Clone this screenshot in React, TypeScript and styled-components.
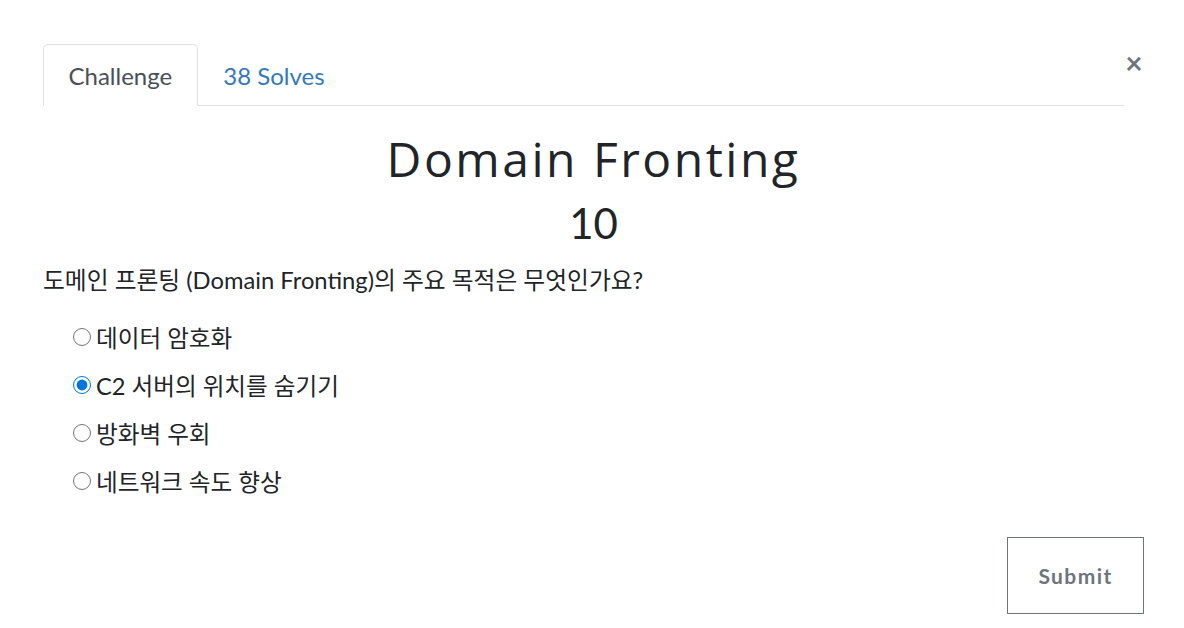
import React, { useState } from "react";
import styled, { createGlobalStyle } from "styled-components";

const Global = createGlobalStyle`
  html, body { margin: 0; padding: 0; background: #fff; }
  body { font-family: Lato, "Noto Sans CJK KR", sans-serif; color: #212529; }
  * { box-sizing: border-box; }
`;

const Page = styled.div`
  width: 1184px;
  height: 628px;
  padding: 44px 40px 0 43px;
  display: flex;
  flex-direction: column;
`;

const Header = styled.div`
  display: flex;
  align-items: flex-start;
`;

const Nav = styled.ul`
  flex: 1;
  display: flex;
  margin: 0;
  padding: 0;
  list-style: none;
  border-bottom: 1px solid #dee2e6;
`;

const Tab = styled.li<{ $active?: boolean }>`
  margin-bottom: -1px;
  padding: 0 24.5px;
  height: 62px;
  display: flex;
  align-items: center;
  font-size: 24px;
  border: 1px solid ${(p) => (p.$active ? "#dee2e6" : "transparent")};
  border-bottom-color: ${(p) => (p.$active ? "#fff" : "transparent")};
  border-radius: 5px 5px 0 0;
  background: ${(p) => (p.$active ? "#fff" : "transparent")};
  color: ${(p) => (p.$active ? "#495057" : "#337ab7")};
  cursor: pointer;
`;

const Close = styled.button`
  width: 20px;
  margin: 4px 0 0 0;
  padding: 0;
  border: none;
  background: none;
  font-family: Lato, sans-serif;
  font-size: 30px;
  font-weight: 700;
  line-height: 28px;
  color: #6c757d;
  cursor: pointer;
`;

const Title = styled.h2`
  margin: 24px 0 0;
  text-align: center;
  font-family: "Open Sans", Lato, sans-serif;
  font-weight: 400;
  font-size: 48px;
  letter-spacing: 2.5px;
  line-height: 58px;
`;

const Value = styled.div`
  margin-top: 5px;
  text-align: center;
  font-size: 42px;
  line-height: 60px;
`;

const Question = styled.p`
  margin: 9px 0 0;
  font-size: 23.75px;
  line-height: 36px;
`;

const Options = styled.div`
  margin-top: 22px;
  padding-left: 30px;
  display: flex;
  flex-direction: column;
  gap: 14px;
`;

const Option = styled.label`
  display: flex;
  align-items: center;
  gap: 5px;
  height: 34px;
  font-size: 23.6px;
  cursor: pointer;
`;

const Radio = styled.input`
  width: 18px;
  height: 18px;
  margin: 0;
  accent-color: #0075de;
`;

const Footer = styled.div`
  margin-top: auto;
  display: flex;
  justify-content: flex-end;
  padding-bottom: 14px;
`;

const Submit = styled.button`
  width: 137px;
  height: 77px;
  border: 1px solid #6c757d;
  background: #fff;
  color: #6c757d;
  font-family: Lato, sans-serif;
  font-weight: 700;
  font-size: 21px;
  letter-spacing: 1.4px;
  cursor: pointer;
`;

const options = ["데이터 암호화", "C2 서버의 위치를 숨기기", "방화벽 우회", "네트워크 속도 향상"];

export default function App() {
  const [sel, setSel] = useState(1);
  return (
    <>
      <Global />
      <Page>
        <Header>
          <Nav>
            <Tab $active>Challenge</Tab>
            <Tab>38 Solves</Tab>
          </Nav>
          <Close aria-label="Close">×</Close>
        </Header>
        <Title>Domain Fronting</Title>
        <Value>10</Value>
        <Question>도메인 프론팅 (Domain Fronting)의 주요 목적은 무엇인가요?</Question>
        <Options>
          {options.map((o, i) => (
            <Option key={o}>
              <Radio type="radio" name="answer" checked={sel === i} onChange={() => setSel(i)} />
              {o}
            </Option>
          ))}
        </Options>
        <Footer>
          <Submit>Submit</Submit>
        </Footer>
      </Page>
    </>
  );
}
